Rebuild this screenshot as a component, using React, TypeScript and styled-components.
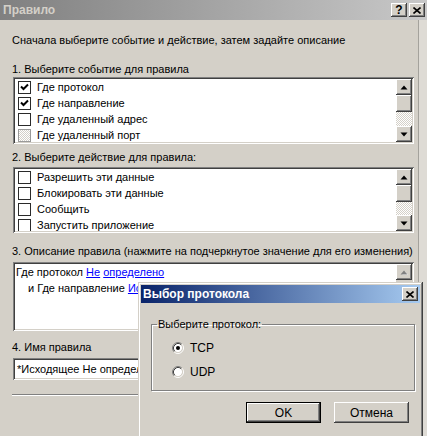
import styled, { createGlobalStyle, css } from "styled-components";

const face = "#d4d0c8";
const shadow = "#808080";
const dark = "#404040";
const light = "#ffffff";

const GlobalStyle = createGlobalStyle`
  html, body { margin: 0; padding: 0; background: #dedbd5; }
  body { font: 400 11px/14px "Liberation Sans", Arial, sans-serif; color: #000; }
`;

const raised = css`
  background: ${face};
  box-shadow: inset -1px -1px ${dark}, inset 1px 1px ${light}, inset -2px -2px ${shadow}, inset 2px 2px ${face};
`;

const sunken = css`
  box-shadow: inset 1px 1px ${shadow}, inset -1px -1px ${light}, inset 2px 2px ${dark}, inset -2px -2px ${face};
`;

const Screen = styled.div`
  position: relative;
  width: 427px;
  height: 436px;
  overflow: hidden;
  display: flex;
  flex-direction: column;
`;

const TitleBar = styled.div<{ $active?: boolean }>`
  height: ${p => (p.$active ? 18 : 20)}px;
  flex: none;
  display: flex;
  align-items: center;
  padding: 0 2px 0 ${p => (p.$active ? 2 : 3)}px;
  gap: 2px;
  background: ${p =>
    p.$active
      ? "linear-gradient(to right, #0a246a, #a6caf0)"
      : "linear-gradient(to right, #808080, #c8c8c8)"};
`;

const TitleText = styled.div<{ $active?: boolean }>`
  flex: 1;
  font: 700 12px/16px "Liberation Sans", Arial, sans-serif;
  color: ${p => (p.$active ? "#fff" : face)};
`;

const CapButton = styled.div`
  ${raised};
  width: 16px;
  height: 14px;
  display: flex;
  align-items: center;
  justify-content: center;
  font: 700 12px/14px "Liberation Sans", Arial, sans-serif;
  color: #000;
`;

const Body = styled.div`
  flex: 1;
  display: flex;
  background: ${face};
`;

const Content = styled.div`
  width: 419px;
  box-sizing: border-box;
  border-right: 1px solid #a4a29c;
  padding: 13px 4px 0 12px;
  display: flex;
  flex-direction: column;
`;

const Edge = styled.div`
  flex: 1;
  background: #dedbd5;
`;

const Label = styled.div<{ $mt?: number }>`
  margin-top: ${p => p.$mt ?? 0}px;
  line-height: 14px;
  white-space: nowrap;
`;

const ListBox = styled.div<{ $h: number; $mt: number }>`
  ${sunken};
  background: #fff;
  height: ${p => p.$h}px;
  margin: ${p => p.$mt}px 0 0 1px;
  padding: 2px;
  box-sizing: border-box;
  display: flex;
  overflow: hidden;
`;

const Rows = styled.div`
  flex: 1;
  padding-left: 3px;
  overflow: hidden;
`;

const Row = styled.div`
  height: 16px;
  display: flex;
  align-items: center;
  gap: 6px;
  white-space: nowrap;
`;

const Box = styled.div<{ $dim?: boolean }>`
  width: 11px;
  height: 11px;
  flex: none;
  border: 1px solid #2a2a2a;
  background: ${p =>
    p.$dim ? `repeating-conic-gradient(${face} 0 25%, #fff 0 50%) 0 0/2px 2px` : "#fff"};
  border-color: ${p => (p.$dim ? "#9a9a9a" : "#2a2a2a")};
  display: flex;
  align-items: center;
  justify-content: center;
`;

const ScrollBar = styled.div<{ $disabled?: boolean }>`
  width: 16px;
  flex: none;
  display: flex;
  flex-direction: column;
  background: ${p =>
    p.$disabled ? face : `repeating-conic-gradient(${face} 0 25%, #fff 0 50%) 0 0/2px 2px`};
`;

const ArrowButton = styled.div`
  ${raised};
  width: 16px;
  height: 16px;
  flex: none;
  display: flex;
  align-items: center;
  justify-content: center;
`;

const Thumb = styled.div`
  ${raised};
  height: 17px;
  flex: none;
`;

const Track = styled.div`
  flex: 1;
`;

const DescBox = styled.div`
  ${sunken};
  background: #fff;
  height: 69px;
  margin: 4px 0 0 1px;
  padding: 2px;
  box-sizing: border-box;
  display: flex;
`;

const DescText = styled.div`
  flex: 1;
  padding: 0 1px;
  line-height: 16px;
  white-space: nowrap;
  overflow: hidden;
`;

const Indent = styled.div`
  padding-left: 12px;
`;

const Link = styled.span`
  color: #0000ff;
  text-decoration: underline;
`;

const TextField = styled.div`
  ${sunken};
  background: #fff;
  height: 22px;
  margin: 4px 0 0 1px;
  padding: 0 4px;
  box-sizing: border-box;
  display: flex;
  align-items: center;
  white-space: nowrap;
  overflow: hidden;
`;

const Separator = styled.div`
  margin-top: 14px;
  height: 0;
  border-top: 1px solid ${shadow};
  border-bottom: 1px solid #fff;
`;

const Dialog = styled.div`
  position: absolute;
  left: 138px;
  top: 282px;
  width: 285px;
  height: 170px;
  padding: 3px;
  box-sizing: border-box;
  background: ${face};
  box-shadow: inset -1px -1px ${dark}, inset 1px 1px ${face}, inset -2px -2px ${shadow}, inset 2px 2px ${light};
  display: flex;
  flex-direction: column;
`;

const DialogBody = styled.div`
  padding: 0 5px 0 10px;
  display: flex;
  flex-direction: column;
`;

const Group = styled.fieldset`
  margin: 14px 0 0 0;
  padding: 5px 0 6px 20px;
  border: 1px solid ${shadow};
  box-shadow: 1px 1px 0 #fff, inset 1px 1px 0 #fff;
  min-width: 0;
`;

const Legend = styled.legend`
  margin-left: -15px;
  padding: 0 1px;
  line-height: 14px;
`;

const RadioRow = styled.div`
  height: 24px;
  display: flex;
  align-items: center;
  gap: 6px;
  font-size: 12px;
`;

const ButtonRow = styled.div`
  margin-top: 11px;
  padding-right: 6px;
  display: flex;
  justify-content: flex-end;
  gap: 13px;
`;

const PushButton = styled.div<{ $default?: boolean }>`
  ${raised};
  width: 75px;
  height: 21px;
  box-sizing: border-box;
  display: flex;
  align-items: center;
  justify-content: center;
  font-size: 12px;
  ${p =>
    p.$default &&
    css`
      border: 1px solid #000;
    `}
`;

function CheckMark() {
  return (
    <svg width="9" height="9" viewBox="0 0 9 9">
      <path d="M1 3.5 L3.5 6 L8 1.5" fill="none" stroke="#000" strokeWidth="2" />
    </svg>
  );
}

function Arrow({ down, disabled }: { down?: boolean; disabled?: boolean }) {
  const d = down ? "M0.5 0.5 H7.5 L4 4.5 Z" : "M0.5 4.5 H7.5 L4 0.5 Z";
  return (
    <svg width="8" height="5" viewBox="0 0 8 5">
      {disabled && <path d={d} transform="translate(1 1)" fill="#fff" />}
      <path d={d} fill={disabled ? shadow : "#000"} />
    </svg>
  );
}

function CloseGlyph() {
  return (
    <svg width="8" height="7" viewBox="0 0 8 7">
      <path d="M0.5 0.5 L7.5 6.5 M7.5 0.5 L0.5 6.5" stroke="#000" strokeWidth="1.6" />
    </svg>
  );
}

function Radio({ on }: { on?: boolean }) {
  return (
    <svg width="12" height="12" viewBox="0 0 12 12">
      <circle cx="6" cy="6" r="4.2" fill="#fff" />
      <path d="M2.11 9.89 A5.5 5.5 0 0 1 9.89 2.11" fill="none" stroke={shadow} />
      <path d="M9.89 2.11 A5.5 5.5 0 0 1 2.11 9.89" fill="none" stroke="#fff" />
      <path d="M2.82 9.18 A4.5 4.5 0 0 1 9.18 2.82" fill="none" stroke={dark} />
      <path d="M9.18 2.82 A4.5 4.5 0 0 1 2.82 9.18" fill="none" stroke={face} />
      {on && <circle cx="6" cy="6" r="2" fill="#000" />}
    </svg>
  );
}

type Item = { text: string; checked?: boolean; dim?: boolean };

function CheckList({ items, h, mt }: { items: Item[]; h: number; mt: number }) {
  return (
    <ListBox $h={h} $mt={mt}>
      <Rows>
        {items.map(it => (
          <Row key={it.text}>
            <Box $dim={it.dim}>{it.checked && <CheckMark />}</Box>
            {it.text}
          </Row>
        ))}
      </Rows>
      <ScrollBar>
        <ArrowButton><Arrow /></ArrowButton>
        <Thumb />
        <Track />
        <ArrowButton><Arrow down /></ArrowButton>
      </ScrollBar>
    </ListBox>
  );
}

const events: Item[] = [
  { text: "Где протокол", checked: true },
  { text: "Где направление", checked: true },
  { text: "Где удаленный адрес" },
  { text: "Где удаленный порт", dim: true },
];

const actions: Item[] = [
  { text: "Разрешить эти данные" },
  { text: "Блокировать эти данные" },
  { text: "Сообщить" },
  { text: "Запустить приложение" },
];

export default function App() {
  return (
    <>
      <GlobalStyle />
      <Screen>
        <TitleBar>
          <TitleText>Правило</TitleText>
          <CapButton>?</CapButton>
          <CapButton><CloseGlyph /></CapButton>
        </TitleBar>
        <Body>
          <Content>
            <Label>Сначала выберите событие и действие, затем задайте описание</Label>
            <Label $mt={15}>1. Выберите событие для правила</Label>
            <CheckList items={events} h={67} mt={1} />
            <Label $mt={6}>2. Выберите действие для правила:</Label>
            <CheckList items={actions} h={66} mt={3} />
            <Label $mt={11}>3. Описание правила (нажмите на подчеркнутое значение для его изменения)</Label>
            <DescBox>
              <DescText>
                <div>
                  Где протокол <Link>Не</Link> <Link>определено</Link>
                </div>
                <Indent>
                  и Где направление <Link>Исходящее</Link>
                </Indent>
              </DescText>
              <ScrollBar $disabled>
                <ArrowButton><Arrow disabled /></ArrowButton>
              </ScrollBar>
            </DescBox>
            <Label $mt={9}>4. Имя правила</Label>
            <TextField>*Исходящее Не определено</TextField>
            <Separator />
          </Content>
          <Edge />
        </Body>

        <Dialog>
          <TitleBar $active>
            <TitleText $active>Выбор протокола</TitleText>
            <CapButton><CloseGlyph /></CapButton>
          </TitleBar>
          <DialogBody>
            <Group>
              <Legend>Выберите протокол:</Legend>
              <RadioRow><Radio on />TCP</RadioRow>
              <RadioRow><Radio />UDP</RadioRow>
            </Group>
            <ButtonRow>
              <PushButton $default>OK</PushButton>
              <PushButton>Отмена</PushButton>
            </ButtonRow>
          </DialogBody>
        </Dialog>
      </Screen>
    </>
  );
}
